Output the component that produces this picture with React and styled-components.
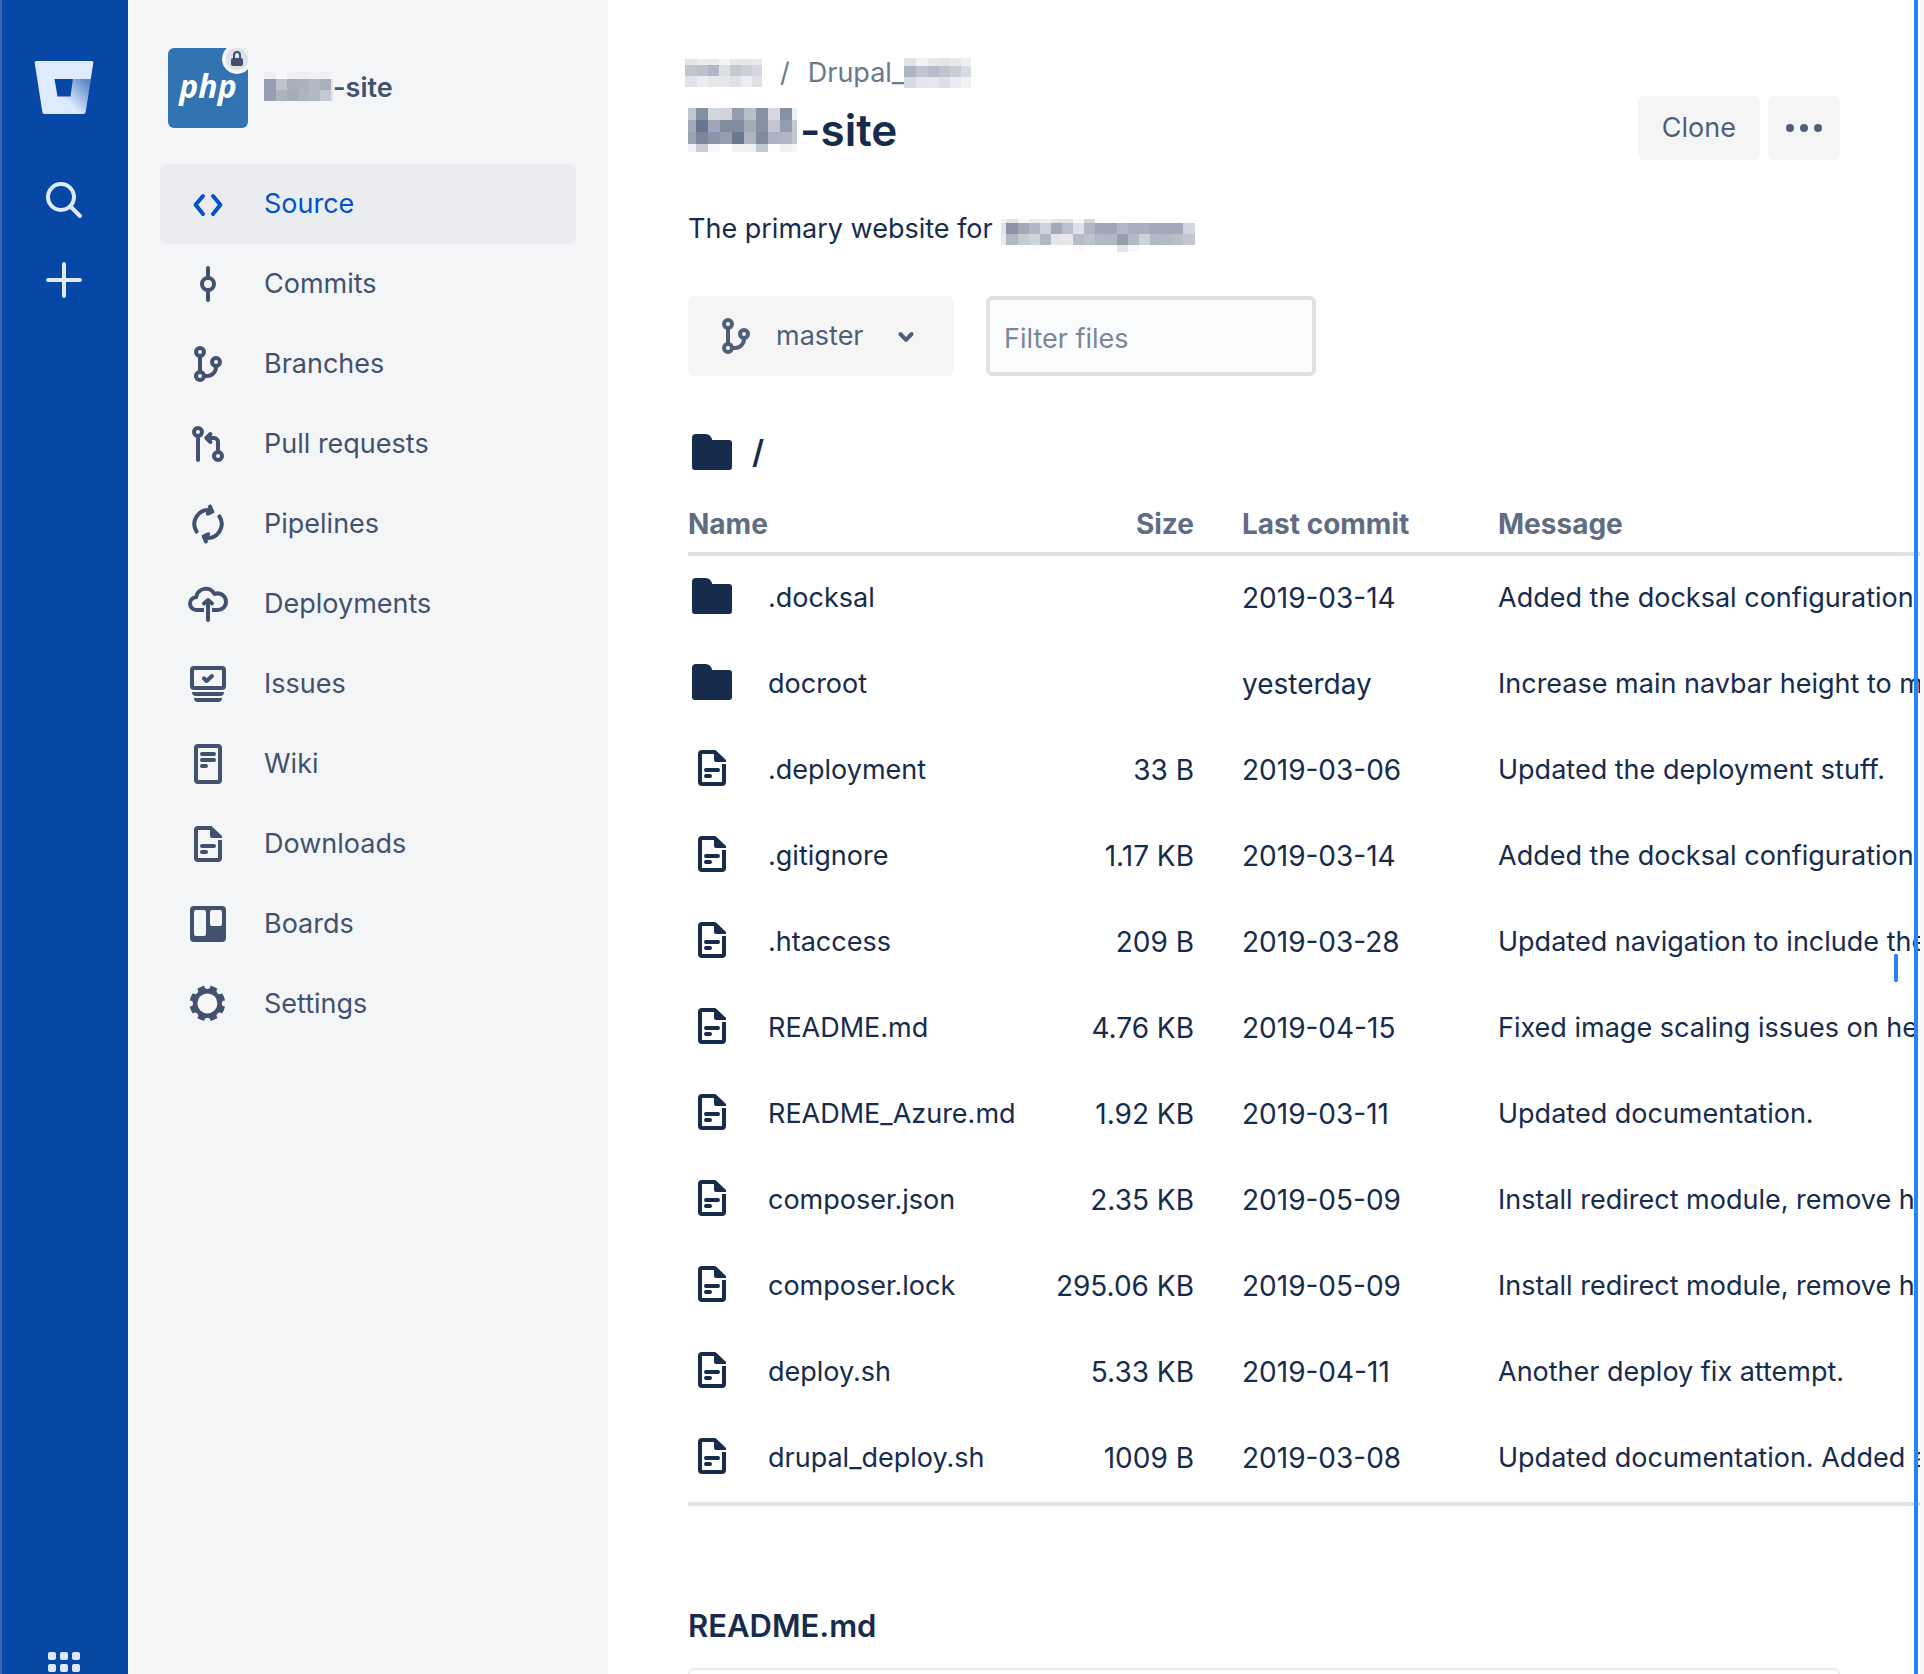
import React from "react";
import styled, { createGlobalStyle } from "styled-components";

const color = {
  rail: "#0747a6",
  railEdge: "#3866b0",
  railIcon: "#deebff",
  panel: "#f4f5f7",
  selected: "#ebecf0",
  link: "#0052cc",
  nav: "#42526e",
  button: "#505f79",
  buttonBg: "#f5f5f5",
  text: "#172b4d",
  heading: "#5e6c84",
  subtle: "#6b778c",
  placeholder: "#7a869a",
  line: "#dfe1e6",
  focus: "#2684ff",
};

const GlobalStyle = createGlobalStyle`
  * { box-sizing: border-box; }
  body {
    margin: 0;
    overflow: hidden;
    background: #fff;
    color: ${color.text};
    font-family: Inter, "Liberation Sans", sans-serif;
    font-size: 27px;
    line-height: 40px;
  }
  button, input { font: inherit; color: inherit; }
  a { color: inherit; text-decoration: none; }
`;

const Page = styled.div`
  display: flex;
  height: 100vh;
  overflow: hidden;
`;

const Rail = styled.nav`
  flex: 0 0 128px;
  display: flex;
  flex-direction: column;
  align-items: center;
  padding-top: 56px;
  background: ${color.rail};
  border-left: 2px solid ${color.railEdge};
  color: ${color.railIcon};
`;

const RailButton = styled.button`
  display: flex;
  padding: 0;
  border: 0;
  background: none;
  margin-top: ${(p) => p.$gap || 0}px;
  margin-right: 2px;
`;

const RailFooter = styled.div`
  margin-top: auto;
  margin-bottom: -18px;
`;

const Sidebar = styled.aside`
  flex: 0 0 480px;
  padding: 48px 32px;
  background: ${color.panel};
  color: ${color.nav};
`;

const Project = styled.a`
  display: flex;
  align-items: center;
  gap: 16px;
  height: 80px;
  padding-left: 8px;
  font-weight: 600;
`;

const ProjectName = styled.span`
  display: flex;
  align-items: center;
`;

const Avatar = styled.span`
  position: relative;
  display: flex;
  align-items: center;
  justify-content: center;
  width: 80px;
  height: 80px;
  padding-bottom: 4px;
  border-radius: 6px;
  overflow: hidden;
  background: #3174b1;
  color: #fff;
  font: italic 700 32px/40px "Open Sans", sans-serif;
`;

const LockBadge = styled.span`
  position: absolute;
  top: -4px;
  right: -4px;
  display: flex;
  align-items: center;
  justify-content: center;
  width: 30px;
  height: 30px;
  border: 4px solid ${color.panel};
  border-radius: 50%;
  background: ${color.line};
`;

const NavList = styled.ul`
  margin: 36px 0 0;
  padding: 0;
  list-style: none;
`;

const NavLink = styled.a`
  display: flex;
  align-items: center;
  gap: 32px;
  height: 80px;
  padding: 0 24px;
  border-radius: 6px;
  background: ${(p) => (p.$selected ? color.selected : "transparent")};
  color: ${(p) => (p.$selected ? color.link : color.nav)};
`;

const Main = styled.main`
  flex: 1;
  min-width: 0;
  overflow: hidden;
  padding: 53px 80px 0;
`;

const Header = styled.header`
  display: flex;
  justify-content: space-between;
  align-items: flex-start;
`;

const Breadcrumbs = styled.nav`
  display: flex;
  align-items: center;
  gap: 18px;
  height: 40px;
  margin-left: -3px;
  color: ${color.subtle};
`;

const Crumb = styled.a`
  display: flex;
  align-items: center;
`;

const Title = styled.h1`
  display: flex;
  align-items: center;
  gap: 3px;
  margin: 9px 0 0;
  font-size: 44px;
  line-height: 56px;
  font-weight: 600;
`;

const Actions = styled.div`
  display: flex;
  gap: 8px;
  padding-top: 43px;
`;

const Button = styled.button`
  display: flex;
  align-items: center;
  justify-content: center;
  height: 64px;
  padding: 0 ${(p) => p.$pad}px;
  border: 0;
  border-radius: 6px;
  background: ${color.buttonBg};
  color: ${color.button};
`;

const BranchButton = styled(Button)`
  justify-content: space-between;
  gap: 16px;
  min-width: 266px;
  height: 80px;
`;

const BranchName = styled.span`
  flex: 1;
  text-align: left;
`;

const Description = styled.p`
  display: flex;
  align-items: center;
  gap: 8px;
  height: 40px;
  margin: 49px 0 0;
`;

const Toolbar = styled.div`
  display: flex;
  gap: 32px;
  margin-top: 47px;
`;

const Filter = styled.input`
  width: 330px;
  height: 80px;
  padding: 4px 14px 0;
  border: 4px solid ${color.line};
  border-radius: 6px;
  background: #fafbfc;
  &::placeholder { color: ${color.placeholder}; opacity: 1; }
`;

const Path = styled.div`
  display: flex;
  align-items: center;
  gap: 16px;
  height: 48px;
  margin-top: 52px;
  font-size: 32px;
  font-weight: 600;
`;

const TableArea = styled.div`
  margin-right: -80px;
  overflow: hidden;
`;

const Table = styled.table`
  width: 100%;
  table-layout: fixed;
  border-collapse: separate;
  border-spacing: 0;
  border-bottom: 4px solid ${color.line};
  white-space: nowrap;
`;

const Col = styled.col`
  width: ${(p) => p.$width};
`;

const HeadCell = styled.th`
  height: 80px;
  padding: 28px 0 8px ${(p) => p.$indent || 0}px;
  border-bottom: 4px solid ${color.line};
  color: ${color.heading};
  font-size: 28px;
  font-weight: 700;
  text-align: ${(p) => (p.$right ? "right" : "left")};
`;

const Cell = styled.td`
  height: 86px;
  padding: 0 0 2px ${(p) => p.$indent || 0}px;
`;

const SizeCell = styled(Cell)`
  font-size: 28px;
  text-align: right;
`;

const DateCell = styled(Cell)`
  font-size: 28px;
`;

const FileLink = styled.a`
  display: flex;
  align-items: center;
  gap: 32px;
`;

const FileIconBox = styled.span`
  display: flex;
  height: 52px;
`;

const ReadmeTitle = styled.h2`
  margin: 100px 0 0;
  font-size: 31px;
  line-height: 40px;
  font-weight: 600;
`;

const ReadmeCard = styled.section`
  height: 200px;
  margin-top: 22px;
  border: 2px solid ${color.selected};
  border-radius: 6px;
`;

const EdgeLine = styled.div`
  position: fixed;
  top: 0;
  bottom: 0;
  right: 6px;
  width: 4px;
  background: ${color.focus};
`;

const EdgeStrip = styled.div`
  flex: 0 0 4px;
  background: ${color.panel};
`;

const Caret = styled.div`
  position: fixed;
  top: 954px;
  right: 26px;
  width: 4px;
  height: 28px;
  border-radius: 1px;
  background: ${color.focus};
`;

/* ---------- redacted words, drawn as coarse pixel blocks ---------- */

function Mosaic({ cols, rows, w, h, data }) {
  return (
    <svg width={w} height={h} shapeRendering="crispEdges" aria-hidden="true">
      {data.map((line, r) =>
        line.split(" ").map((c, i) => (
          <rect key={r + "-" + i} x={cols[i]} y={rows[r]} width={cols[i + 1] - cols[i]} height={rows[r + 1] - rows[r]} fill={"#" + c} />
        ))
      )}
    </svg>
  );
}

const sidebarMosaic = {
  w: 69, h: 32,
  cols: [0, 12, 23, 34, 45, 56, 67, 69],
  rows: [0, 7, 18, 29, 32],
  data: [
    "edeff2 f6f7f9 f0f1f4 eeeff2 f1f2f4 eeeff2 f3f4f6",
    "979eb0 bfc3ce a9aebb abb0bd b3b8c5 a9afbd e4e6ea",
    "979eb0 aeb3c0 a6abb9 afb4c1 b3b8c5 c5c9d1 e4e6ea",
    "f6f7f8 f3f4f6 f8f8fa f3f4f6 f3f4f6 f6f7f8 f3f4f6",
  ],
};

const crumbMosaic = {
  w: 77, h: 28,
  cols: [0, 12, 23, 34, 45, 56, 67, 77],
  rows: [0, 6, 17, 28],
  data: [
    "e4e5ea ebebf0 e9eaef f4f4f7 e3e5e9 e6e7eb e8e9ed",
    "c1c5d0 bcc1ce b0b6c4 dddfe4 c4c8d1 cbced6 d5d8dd",
    "e1e2e7 ebedf0 e5e8ea e3e7ea dfe1e6 ecedf1 e0e1e7",
  ],
};

const crumbMosaic2 = {
  w: 67, h: 30,
  cols: [0, 12, 24, 35, 46, 57, 67],
  rows: [0, 8, 19, 30],
  data: [
    "dfe2e8 f1f2f5 e7e9ed e3e5ea e8e9ed eeeff3",
    "aeb5c2 c1c5cf b6bcc9 c1c5d0 cacdd6 d8dbe1",
    "d7dbe0 e3e5ea e6e7eb dcdfe5 ebecf0 f2f3f6",
  ],
};

const titleMosaic = {
  w: 109, h: 44,
  cols: [0, 8, 20, 32, 44, 56, 68, 80, 92, 104, 109],
  rows: [0, 12, 24, 36, 44],
  data: [
    "c1c6d0 848fa3 d2d6dd d0d3da 949db0 b8bfcb 8791a4 d5d8df 8690a3 eeeff2",
    "a1a8b7 6b768e a0a6b6 838da0 828c9f a2a9b7 8690a4 c2c5d0 949bae c5c9d2",
    "9ba2b3 7c859b 8b94a9 959daf 6c788e adb3c1 808a9f abb2c0 b0b6c3 c3c7d0",
    "f0f1f4 c7cbd5 f6f7f9 ffffff f1f2f5 eeeff2 c3c7d2 fcfcfd eeeff3 f8f8fa",
  ],
};

const descriptionMosaic = {
  w: 194, h: 46,
  cols: [0, 5, 17, 28, 39, 50, 61, 72, 83, 94, 105, 116, 127, 138, 149, 160, 171, 182, 194],
  rows: [13, 17, 28, 39, 46],
  data: [
    "f3f4f6 e0e3e8 f6f7f9 e9ebef eeeff2 e4e6eb e3e5ea f5f6f8 d3d6de fafafb ffffff ffffff ffffff ffffff ffffff ffffff ffffff ffffff",
    "dfe1e6 8a94a6 a2a8b6 b1b6c3 cdd1d9 a2a8b7 b9bfcb dfe1e6 b1b7c4 a0a6b5 a0a6b6 b3b8c6 a8aebc a9afbe a0a7b6 a2a8b7 a3a9b8 d3d6df",
    "eaebef b1b7c4 c6cad3 ced2d9 b1b6c3 e2e4e9 e5e7eb b7bcc8 bfc3cf b3b8c5 b2b7c4 969faf b4b9c6 cfd2da b2b7c5 b4b9c6 b9bec9 c3c7d1",
    "ffffff ffffff ffffff fdfdfd ffffff ffffff ffffff fbfbfc ffffff ffffff ffffff e3e5ea f7f8f9 ffffff ffffff ffffff ffffff ffffff",
  ],
};

/* ---------- icons ---------- */

function Icon({ children, size = 48 }) {
  return (
    <svg width={size} height={size} viewBox="0 0 24 24" fill="none" stroke="currentColor" strokeWidth="2" strokeLinecap="round" strokeLinejoin="round" aria-hidden="true">
      {children}
    </svg>
  );
}

const SourceIcon = () => (
  <Icon><path d="M9.500 8 5.800 12.400 9.500 17M14.500 8l3.700 4.400-3.700 4.600" /></Icon>
);
const CommitsIcon = () => (
  <Icon><circle cx="12" cy="12" r="3" /><path d="M12 4v4M12 16v4" /></Icon>
);
const BranchIcon = () => (
  <Icon>
    <circle cx="8" cy="6" r="2" /><circle cx="8" cy="18" r="2" /><circle cx="16" cy="11" r="2" />
    <path d="M8 8v8M10 18h1.500a4.500 4.500 0 0 0 4.500-4.500V13" />
  </Icon>
);
const PullIcon = () => (
  <Icon>
    <circle cx="7" cy="6" r="2" /><circle cx="17" cy="18" r="2" />
    <path d="M7 8v12M17 16v-5a2 2 0 0 0-2-2h-3.500M13.200 7l-2 2 2 2" />
  </Icon>
);
const PipelinesHalf = () => (
  <>
    <path d="M6.300 15.800A7 7 0 0 1 12.800 5.050" />
    <path d="M13 3.300l1.100 2.500-2.200 1" />
  </>
);
const PipelinesIcon = () => (
  <Icon>
    <PipelinesHalf />
    <g transform="rotate(180 12 12)"><PipelinesHalf /></g>
  </Icon>
);
const DeployIcon = () => (
  <Icon>
    <path strokeLinecap="butt" d="M10 15H6.200A3.200 3.200 0 0 1 3 11.800a3.200 3.200 0 0 1 3.100-3.200A4.900 4.900 0 0 1 15.300 7a4.200 4.200 0 0 1 5.700 4A4 4 0 0 1 17 15h-3" />
    <path d="M12 10.500V20M10 11.700l2-1.700 2 1.700" />
  </Icon>
);
const IssuesIcon = () => (
  <Icon>
    <rect x="4" y="4" width="16" height="10" rx="1" />
    <path d="M10 9.200l1.300 1.300L14 8" />
    <path stroke="none" fill="currentColor" d="M4 16h16a2 2 0 0 1-2 2H6a2 2 0 0 1-2-2zM5 19h14a2 2 0 0 1-2 2H7a2 2 0 0 1-2-2z" />
  </Icon>
);
const WikiIcon = () => (
  <Icon><rect x="6" y="3" width="12" height="18" rx="1" /><path d="M9 7h6M9 10h6M9 13h2" /></Icon>
);
const FileIcon = () => (
  <Icon>
    <path strokeLinecap="butt" d="M13.500 4H7a1 1 0 0 0-1 1v14a1 1 0 0 0 1 1h10a1 1 0 0 0 1-1v-9" />
    <path stroke="none" fill="currentColor" d="M13 3c.6 0 1 .2 1.400.6L19 8v1h-5a1 1 0 0 1-1-1z" />
    <path d="M9 13h6M9 16h2" />
  </Icon>
);
const BoardsIcon = () => (
  <Icon>
    <path stroke="none" fill="currentColor" fillRule="evenodd" d="M5 3h14a2 2 0 0 1 2 2v14a2 2 0 0 1-2 2H5a2 2 0 0 1-2-2V5a2 2 0 0 1 2-2zM6 5a1 1 0 0 0-1 1v11a1 1 0 0 0 1 1h4a1 1 0 0 0 1-1V6a1 1 0 0 0-1-1zM14 5a1 1 0 0 0-1 1v6a1 1 0 0 0 1 1h4a1 1 0 0 0 1-1V6a1 1 0 0 0-1-1z" />
  </Icon>
);
const SettingsIcon = () => (
  <Icon>
    <mask id="gear" maskUnits="userSpaceOnUse" x="0" y="0" width="24" height="24">
      <circle cx="11.700" cy="11.700" r="8.900" fill="#fff" stroke="none" />
      <circle cx="11.700" cy="11.700" r="5" fill="#000" stroke="none" />
      {[0, 45, 90, 135, 180, 225, 270, 315].map((a) => (
        <circle key={a} cx="11.700" cy="3" r="1.500" fill="#000" stroke="none" transform={`rotate(${a} 11.700 11.700)`} />
      ))}
    </mask>
    <rect width="24" height="24" fill="currentColor" stroke="none" mask="url(#gear)" />
  </Icon>
);
const FolderIcon = () => (
  <Icon>
    <path stroke="none" fill="currentColor" d="M4 3h4.800c1.600 0 3.200 1.400 3.200 3h8.500A1.500 1.500 0 0 1 22 7.500v12a1.500 1.500 0 0 1-1.500 1.500h-17A1.500 1.500 0 0 1 2 19.500V5a2 2 0 0 1 2-2z" />
  </Icon>
);
const ChevronIcon = () => (
  <Icon><path d="M9.200 11l2.800 2.900 2.800-2.900" /></Icon>
);
const MoreIcon = () => (
  <svg width="36" height="8" viewBox="0 0 36 8" fill="currentColor" aria-hidden="true">
    <circle cx="4" cy="4" r="4" /><circle cx="18" cy="4" r="4" /><circle cx="32" cy="4" r="4" />
  </svg>
);
const LockIcon = () => (
  <svg width="12" height="16" viewBox="0 0 12 16" fill="none" aria-hidden="true">
    <path d="M3 8V4a3 3 0 0 1 6 0v4" stroke={color.nav} strokeWidth="2" />
    <rect y="7" width="12" height="8" rx="2" fill={color.nav} />
  </svg>
);
const LogoIcon = () => (
  <svg width="60" height="64" viewBox="0 0 60 64" aria-hidden="true">
    <defs>
      <linearGradient id="fold" x1="58" y1="24" x2="34" y2="46" gradientUnits="userSpaceOnUse">
        <stop offset="0.150" stopColor="#0747a6" stopOpacity="0.600" />
        <stop offset="1" stopColor="#0747a6" stopOpacity="0" />
      </linearGradient>
    </defs>
    <path fill="#deebff" fillRule="evenodd" d="M2 5h55.500a1.800 1.800 0 0 1 1.800 2.100L51.600 56.300A2 2 0 0 1 49.600 58H10.400a2 2 0 0 1-2-1.700L.7 7.100A1.800 1.800 0 0 1 2 5zM20.500 23l3 17.500h13L39 23z" />
    <path fill="url(#fold)" d="M39 23h18l-5.400 33.300A2 2 0 0 1 49.600 58H40L23.500 40.500h13z" />
  </svg>
);
const SearchIcon = () => (
  <Icon><circle cx="10.500" cy="10.500" r="6.500" /><path d="M15.500 15.500 20 20" /></Icon>
);
const PlusIcon = () => (
  <Icon><path d="M12 4v16M4 12h16" /></Icon>
);
const AppsIcon = () => (
  <Icon>
    {[4, 10, 16].map((y) => [4, 10, 16].map((x) => (
      <rect key={x + "-" + y} x={x} y={y} width="4" height="4" rx="1" fill="currentColor" stroke="none" />
    )))}
  </Icon>
);

/* ---------- data ---------- */

const navItems = [
  ["Source", SourceIcon],
  ["Commits", CommitsIcon],
  ["Branches", BranchIcon],
  ["Pull requests", PullIcon],
  ["Pipelines", PipelinesIcon],
  ["Deployments", DeployIcon],
  ["Issues", IssuesIcon],
  ["Wiki", WikiIcon],
  ["Downloads", FileIcon],
  ["Boards", BoardsIcon],
  ["Settings", SettingsIcon],
];

const files = [
  { dir: true, name: ".docksal", size: "", date: "2019-03-14", message: "Added the docksal configuration" },
  { dir: true, name: "docroot", size: "", date: "yesterday", message: "Increase main navbar height to m" },
  { name: ".deployment", size: "33 B", date: "2019-03-06", message: "Updated the deployment stuff." },
  { name: ".gitignore", size: "1.17 KB", date: "2019-03-14", message: "Added the docksal configuration" },
  { name: ".htaccess", size: "209 B", date: "2019-03-28", message: "Updated navigation to include the" },
  { name: "README.md", size: "4.76 KB", date: "2019-04-15", message: "Fixed image scaling issues on he" },
  { name: "README_Azure.md", size: "1.92 KB", date: "2019-03-11", message: "Updated documentation." },
  { name: "composer.json", size: "2.35 KB", date: "2019-05-09", message: "Install redirect module, remove h" },
  { name: "composer.lock", size: "295.06 KB", date: "2019-05-09", message: "Install redirect module, remove h" },
  { name: "deploy.sh", size: "5.33 KB", date: "2019-04-11", message: "Another deploy fix attempt." },
  { name: "drupal_deploy.sh", size: "1009 B", date: "2019-03-08", message: "Updated documentation. Added a" },
];

export default function App() {
  return (
    <>
      <GlobalStyle />
      <Page>
        <Rail aria-label="Global">
          <RailButton aria-label="Home"><LogoIcon /></RailButton>
          <RailButton aria-label="Search" $gap={56}><SearchIcon /></RailButton>
          <RailButton aria-label="Create" $gap={32}><PlusIcon /></RailButton>
          <RailFooter>
            <RailButton aria-label="Apps"><AppsIcon /></RailButton>
          </RailFooter>
        </Rail>

        <Sidebar>
          <Project href="#project">
            <Avatar>
              php
              <LockBadge><LockIcon /></LockBadge>
            </Avatar>
            <ProjectName><Mosaic {...sidebarMosaic} />-site</ProjectName>
          </Project>
          <NavList>
            {navItems.map(([label, Glyph], i) => (
              <li key={label}>
                <NavLink href={"#" + label} $selected={i === 0}><Glyph />{label}</NavLink>
              </li>
            ))}
          </NavList>
        </Sidebar>

        <Main>
          <Header>
            <div>
              <Breadcrumbs aria-label="Breadcrumbs">
                <Crumb href="#owner"><Mosaic {...crumbMosaic} /></Crumb>
                <span>/</span>
                <Crumb href="#drupal">Drupal_<Mosaic {...crumbMosaic2} /></Crumb>
              </Breadcrumbs>
              <Title><Mosaic {...titleMosaic} />-site</Title>
            </div>
            <Actions>
              <Button $pad={24}>Clone</Button>
              <Button $pad={18} aria-label="More actions"><MoreIcon /></Button>
            </Actions>
          </Header>

          <Description>The primary website for <Mosaic {...descriptionMosaic} /></Description>

          <Toolbar>
            <BranchButton $pad={24}><BranchIcon /><BranchName>master</BranchName><ChevronIcon /></BranchButton>
            <Filter type="text" aria-label="Filter files" placeholder="Filter files" />
          </Toolbar>

          <Path><FolderIcon />/</Path>

          <TableArea>
            <Table>
              <colgroup>
                <Col $width="336px" />
                <Col $width="170px" />
                <Col $width="304px" />
                <Col $width="auto" />
              </colgroup>
              <thead>
                <tr>
                  <HeadCell>Name</HeadCell>
                  <HeadCell $right>Size</HeadCell>
                  <HeadCell $indent={48}>Last commit</HeadCell>
                  <HeadCell>Message</HeadCell>
                </tr>
              </thead>
              <tbody>
                {files.map((f) => (
                  <tr key={f.name}>
                    <Cell>
                      <FileLink href={"#" + f.name}>
                        <FileIconBox>{f.dir ? <FolderIcon /> : <FileIcon />}</FileIconBox>
                        {f.name}
                      </FileLink>
                    </Cell>
                    <SizeCell>{f.size}</SizeCell>
                    <DateCell $indent={48}>{f.date}</DateCell>
                    <Cell>{f.message}</Cell>
                  </tr>
                ))}
              </tbody>
            </Table>
          </TableArea>

          <ReadmeTitle>README.md</ReadmeTitle>
          <ReadmeCard />
        </Main>
        <EdgeStrip />
      </Page>
      <EdgeLine />
      <Caret />
    </>
  );
}
